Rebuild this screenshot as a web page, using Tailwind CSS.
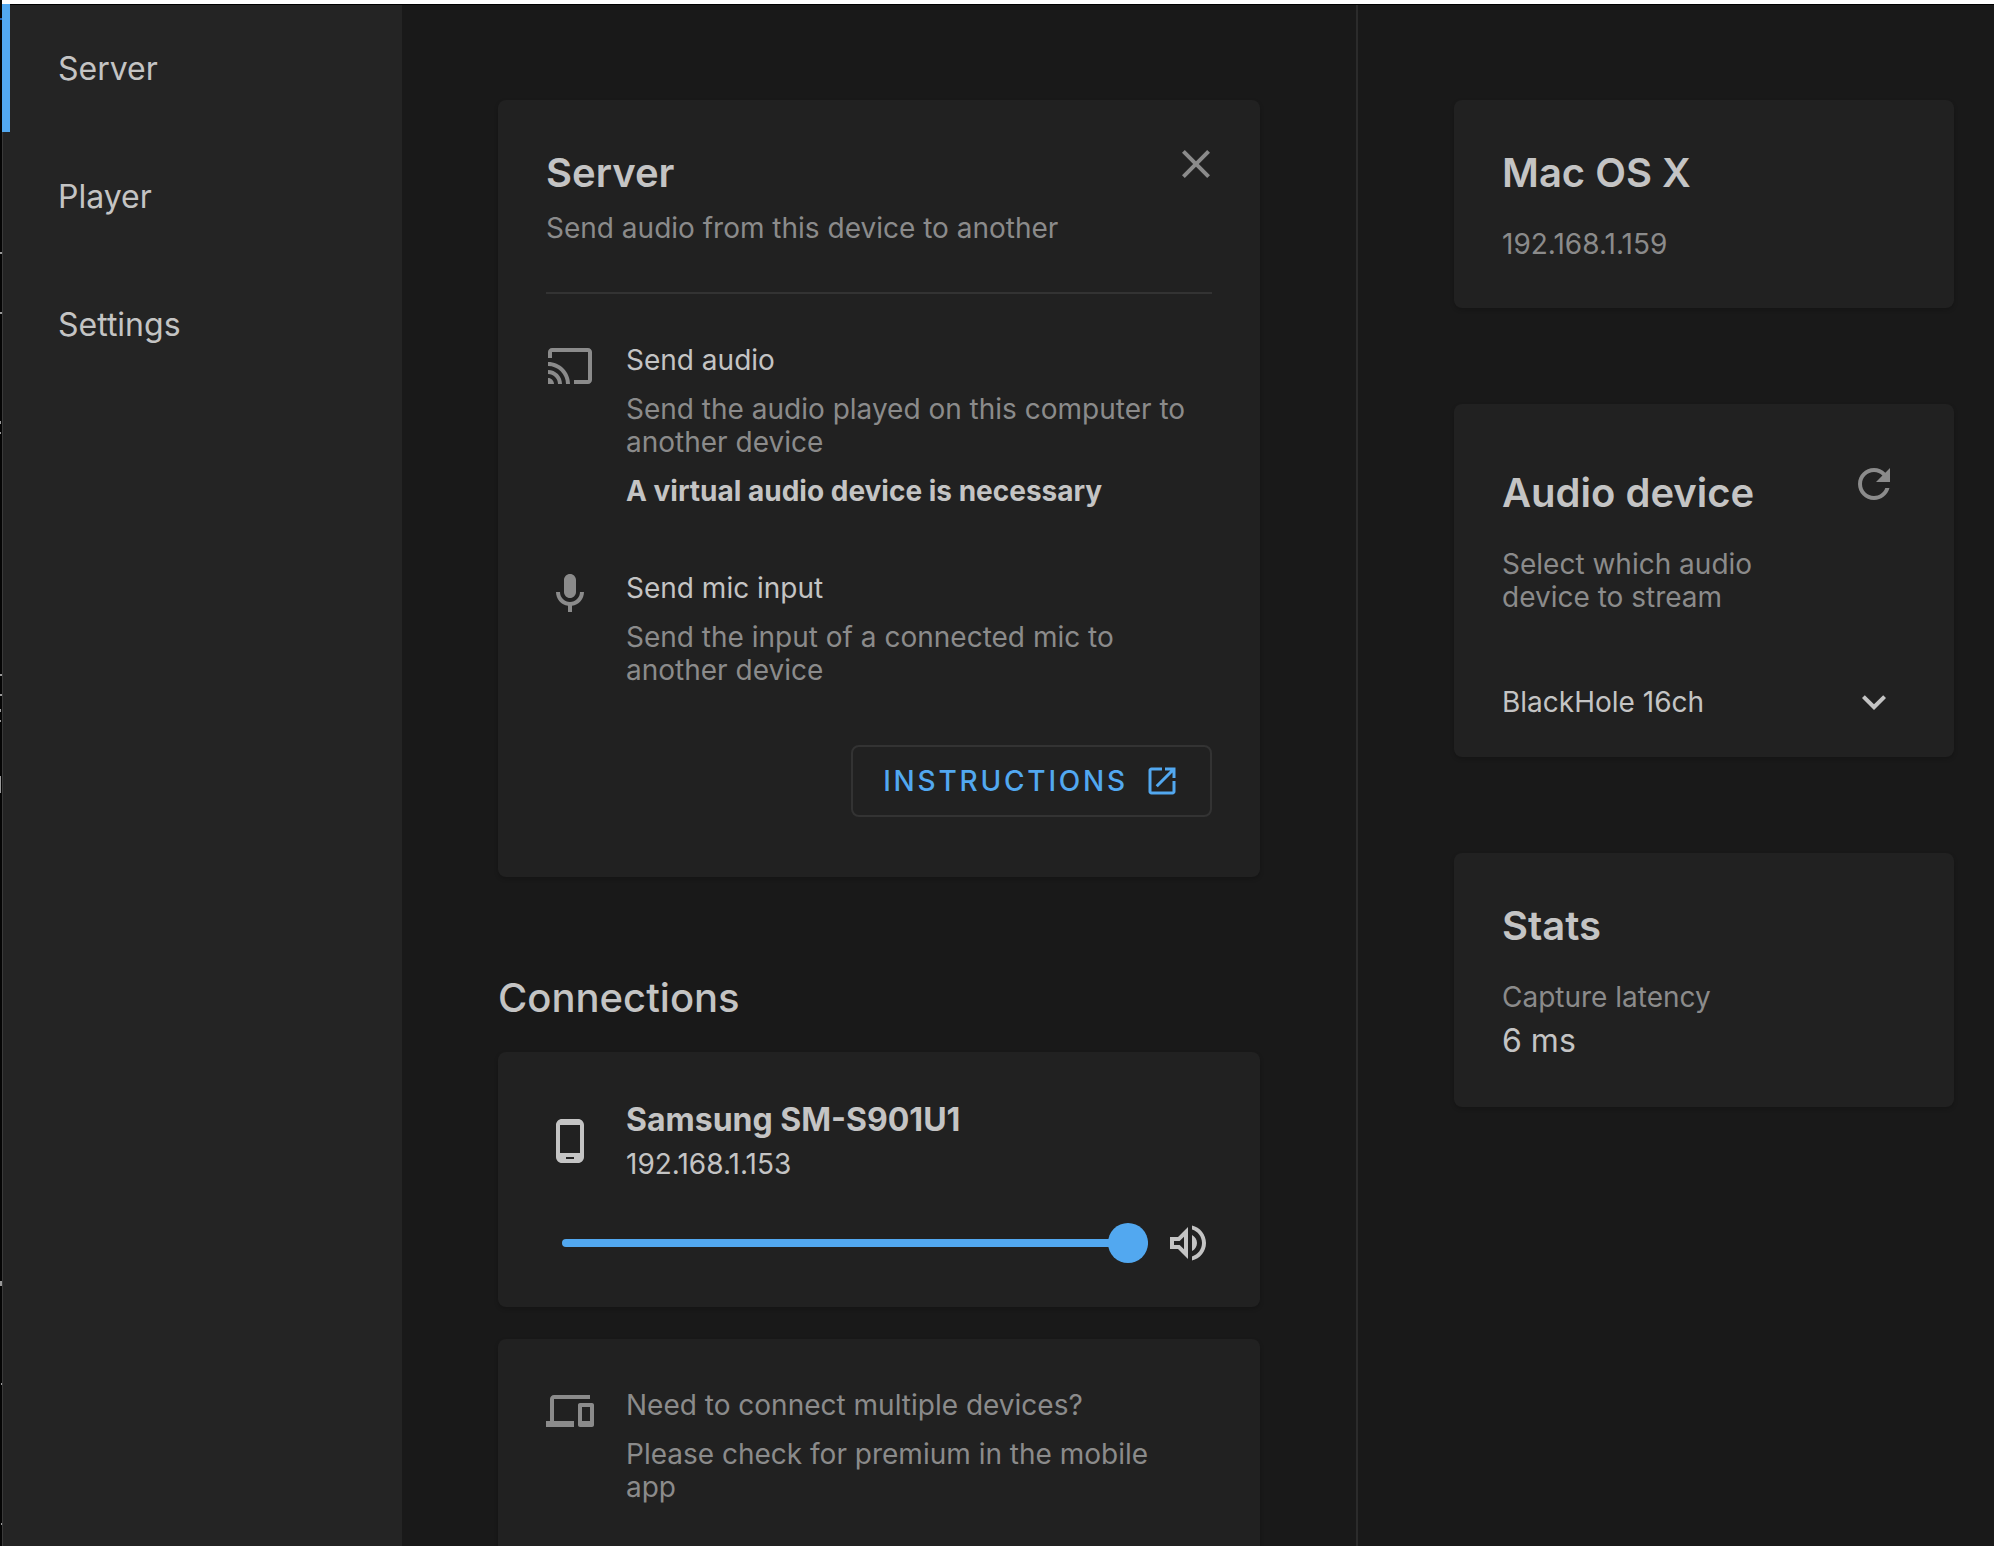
<!DOCTYPE html>
<html lang="en">
<head>
<meta charset="utf-8">
<meta name="viewport" content="width=device-width, initial-scale=1">
<title>Server</title>
<script src="https://cdn.jsdelivr.net/npm/@tailwindcss/browser@4"></script>
</head>
<body class="flex h-screen overflow-hidden bg-[#191919] font-['Inter','Liberation_Sans',sans-serif] text-[28px] leading-[33px] text-[#8b8b8b]">
<!-- sliver of the window behind -->
<svg class="h-full w-0.5 shrink-0 bg-[#050505]" aria-hidden="true" fill="#9a9a9a"><path fill="#1f5fae" d="M0 18h2v2H0z"/><path d="M0 252h2v2H0zM0 312h2v2H0zM0 421h1v3H0zM0 432h1v2H0zM0 674h2v2H0zM0 694h2v2H0zM0 709h1v3H0zM0 720h1v2H0zM0 776h1v17H0zM0 1281h2v5H0zM1 1383h1v2H1zM1 1523h1v2H1z"/></svg>
<div class="flex h-full min-w-0 flex-1 flex-col">
  <div class="h-1 shrink-0 bg-white"></div>
  <div class="flex min-h-0 flex-1 border-t border-black">
    <nav class="w-[400px] shrink-0 border-l border-[#3a3a3a] bg-[#242424] text-[32px] text-[#c4c4c4]" aria-label="Main">
      <a href="#server" aria-current="page" class="-ml-px -mt-px flex h-32 items-center border-l-8 border-[#52a8f0] pl-12">Server</a>
      <a href="#player" class="-ml-px flex h-32 items-center pl-14">Player</a>
      <a href="#settings" class="-ml-px flex h-32 items-center pl-14">Settings</a>
    </nav>

    <main class="min-w-0 flex-1 overflow-hidden px-24 pt-[95px]">
      <section class="relative rounded-lg bg-[#212121] px-12 pt-12 pb-15 shadow-[0_2px_4px_rgba(0,0,0,0.2)]">
        <button type="button" aria-label="Close" class="absolute top-10 right-10 size-12">
          <svg viewBox="0 0 24 24" class="size-12" fill="currentColor"><path d="M19 6.41 17.59 5 12 10.59 6.41 5 5 6.41 10.59 12 5 17.59 6.41 19 12 13.41 17.59 19 19 17.59 13.41 12z"/></svg>
        </button>
        <h1 class="text-[40px] leading-[50px] font-semibold text-[#c4c4c4]">Server</h1>
        <p class="mt-[14px]">Send audio from this device to another</p>
        <hr class="mt-[47px] border-t-2 border-[#333333]">
        <div class="mt-12 flex gap-8">
          <svg viewBox="0 0 24 24" class="size-12 shrink-0" fill="currentColor"><path d="M21 3H3c-1.100 0-2 .9-2 2v3h2V5h18v14h-7v2h7c1.100 0 2-.9 2-2V5c0-1.100-.9-2-2-2zM1 18v3h3c0-1.660-1.340-3-3-3zm0-4v2c2.760 0 5 2.240 5 5h2c0-3.870-3.130-7-7-7zm0-4v2c4.970 0 9 4.030 9 9h2c0-6.080-4.930-11-11-11z"/></svg>
          <div class="pt-0.5 pr-4">
            <h2 class="text-[#c4c4c4]">Send audio</h2>
            <p class="mt-4">Send the audio played on this computer to another device</p>
            <p class="mt-4 font-bold text-[#c4c4c4]">A virtual audio device is necessary</p>
          </div>
        </div>
        <div class="mt-[62px] flex gap-8">
          <svg viewBox="0 0 24 24" class="size-12 shrink-0" fill="currentColor"><path d="M12 14c1.660 0 3-1.340 3-3V5c0-1.660-1.340-3-3-3S9 3.340 9 5v6c0 1.660 1.340 3 3 3zM17 11c0 2.760-2.240 5-5 5s-5-2.240-5-5H5c0 3.530 2.610 6.430 6 6.920V21h2v-3.080c3.390-.49 6-3.390 6-6.920h-2z"/></svg>
          <div class="pt-0.5 pr-4">
            <h2 class="text-[#c4c4c4]">Send mic input</h2>
            <p class="mt-4">Send the input of a connected mic to another device</p>
          </div>
        </div>
        <div class="mt-[58px] flex justify-end">
          <button type="button" class="flex h-18 items-center gap-4 rounded-lg border-2 border-[#333333] px-[30px] font-medium tracking-widest text-[#52a8f0]">INSTRUCTIONS
            <svg viewBox="0 0 24 24" class="size-9" fill="currentColor"><path d="M19 19H5V5h7V3H5c-1.110 0-2 .9-2 2v14c0 1.100.89 2 2 2h14c1.100 0 2-.9 2-2v-7h-2v7zM14 3v2h3.590l-9.830 9.830 1.410 1.410L19 6.410V10h2V3h-7z"/></svg>
          </button>
        </div>
      </section>

      <h1 class="mt-24 text-[40px] leading-[50px] font-medium text-[#c4c4c4]">Connections</h1>
      <section class="mt-[29px] rounded-lg bg-[#212121] px-12 pt-12 pb-10 text-[#c4c4c4] shadow-[0_2px_4px_rgba(0,0,0,0.2)]">
        <div class="flex items-center gap-8">
          <svg viewBox="0 0 24 24" class="size-12 shrink-0" fill="currentColor"><path d="M16 1H8C6.340 1 5 2.340 5 4v16c0 1.660 1.340 3 3 3h8c1.660 0 3-1.340 3-3V4c0-1.660-1.340-3-3-3zm-2 20h-4v-1h4v1zm3-3H7V4h10v14z"/></svg>
          <div>
            <h2 class="text-[32px] leading-[40px] font-bold">Samsung SM-S901U1</h2>
            <p class="mt-2">192.168.1.153</p>
          </div>
        </div>
        <div class="mt-[38px] flex items-center gap-4 pl-4">
          <input type="range" min="0" max="100" value="100" aria-label="Volume" class="h-10 min-w-0 flex-1 appearance-none bg-transparent [&::-webkit-slider-runnable-track]:h-2 [&::-webkit-slider-runnable-track]:rounded-full [&::-webkit-slider-runnable-track]:bg-[#52a8f0] [&::-webkit-slider-thumb]:-mt-4 [&::-webkit-slider-thumb]:size-10 [&::-webkit-slider-thumb]:appearance-none [&::-webkit-slider-thumb]:rounded-full [&::-webkit-slider-thumb]:bg-[#52a8f0]">
          <svg viewBox="0 0 24 24" class="size-12 shrink-0" fill="currentColor"><path d="M3 9v6h4l5 5V4L7 9H3zm7-.17v6.340L7.830 13H5v-2h2.830L10 8.830zM16.500 12c0-1.770-1.020-3.290-2.500-4.030v8.050c1.480-.73 2.500-2.250 2.500-4.020zM14 3.230v2.060c2.890.86 5 3.540 5 6.710s-2.110 5.850-5 6.710v2.060c4.010-.91 7-4.490 7-8.770s-2.990-7.860-7-8.770z"/></svg>
        </div>
      </section>

      <section class="mt-8 flex gap-8 rounded-lg bg-[#212121] p-12 pb-15 shadow-[0_2px_4px_rgba(0,0,0,0.2)]">
        <svg viewBox="0 0 24 24" class="size-12 shrink-0" fill="currentColor"><path d="M4 6h18V4H4c-1.100 0-2 .9-2 2v11H0v3h14v-3H4V6zm19 2h-6c-.55 0-1 .45-1 1v10c0 .55.45 1 1 1h6c.55 0 1-.45 1-1V9c0-.55-.45-1-1-1zm-1 9h-4v-7h4v7z"/></svg>
        <div class="pt-0.5 pr-4">
          <h2>Need to connect multiple devices?</h2>
          <p class="mt-4">Please check for premium in the mobile app</p>
        </div>
      </section>
    </main>

    <aside class="flex w-[638px] shrink-0 flex-col gap-24 border-l-2 border-[#2b2b2b] pt-[95px] pr-10 pl-24">
      <section class="rounded-lg bg-[#212121] px-12 pt-12 pb-[47px] shadow-[0_2px_4px_rgba(0,0,0,0.2)]">
        <h2 class="text-[40px] leading-[50px] font-semibold text-[#c4c4c4]">Mac OS X</h2>
        <p class="mt-[30px]">192.168.1.159</p>
      </section>

      <section class="relative rounded-lg bg-[#212121] pt-16 pr-14 pb-[31px] pl-12 shadow-[0_2px_4px_rgba(0,0,0,0.2)]">
        <button type="button" aria-label="Refresh" class="absolute top-14 right-14 size-12">
          <svg viewBox="0 0 24 24" class="size-12" fill="currentColor"><path d="M17.650 6.350C16.200 4.900 14.210 4 12 4c-4.420 0-7.990 3.580-7.990 8s3.570 8 7.990 8c3.730 0 6.840-2.550 7.730-6h-2.080c-.82 2.330-3.040 4-5.650 4-3.310 0-6-2.690-6-6s2.690-6 6-6c1.660 0 3.140.69 4.220 1.780L13 11h7V4l-2.350 2.350z"/></svg>
        </button>
        <h2 class="text-[40px] leading-[50px] font-semibold text-[#c4c4c4]">Audio device</h2>
        <p class="mt-[30px] pr-20"><label for="device">Select which audio device to stream</label></p>
        <div class="relative mt-16 text-[#c4c4c4]">
          <select id="device" class="block h-12 w-full appearance-none bg-transparent"><option>BlackHole 16ch</option></select>
          <svg viewBox="0 0 24 24" class="pointer-events-none absolute top-0 right-0 size-12" fill="currentColor"><path d="M16.590 8.590 12 13.170 7.410 8.590 6 10l6 6 6-6z"/></svg>
        </div>
      </section>

      <section class="rounded-lg bg-[#212121] px-12 pt-12 pb-[47px] shadow-[0_2px_4px_rgba(0,0,0,0.2)]">
        <h2 class="text-[40px] leading-[50px] font-semibold text-[#c4c4c4]">Stats</h2>
        <p class="mt-[30px]">Capture latency</p>
        <p class="mt-2 text-[32px] leading-[38px] text-[#c4c4c4]">6 ms</p>
      </section>
    </aside>
  </div>
</div>
</body>
</html>
